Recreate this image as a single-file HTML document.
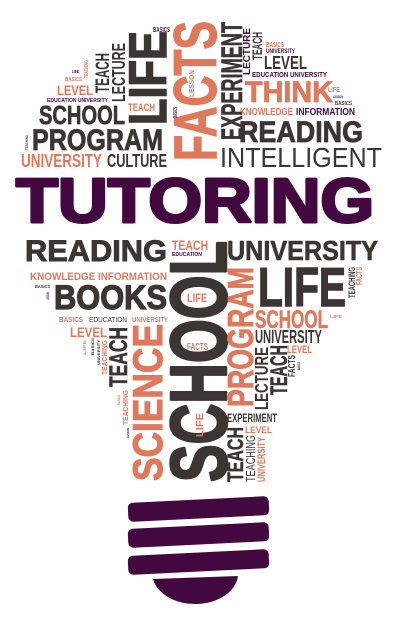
<!DOCTYPE html>
<html><head><meta charset="utf-8"><style>
html,body{margin:0;padding:0;background:#fff;width:400px;height:628px;overflow:hidden}
svg{display:block}
text{font-family:"Liberation Sans",sans-serif;font-weight:bold}
.d{fill:#3b3534}.o{fill:#e0785b}.p{fill:#42083f}.n{font-weight:normal}
.sd{stroke:#3b3534}.so{stroke:#e0785b}.sp{stroke:#42083f}
</style></head><body>
<svg width="400" height="628" viewBox="0 0 400 628" xmlns="http://www.w3.org/2000/svg">
<g>
<text class="p" x="153" y="32" font-size="7" textLength="17" lengthAdjust="spacingAndGlyphs">BASICS</text>
<text class="d" x="264" y="69" font-size="18" textLength="43" lengthAdjust="spacingAndGlyphs">LEVEL</text>
<text class="o" x="266" y="47" font-size="7" textLength="18" lengthAdjust="spacingAndGlyphs">BASICS</text>
<text class="p" x="266" y="53" font-size="6" textLength="29" lengthAdjust="spacingAndGlyphs">UNIVERSITY</text>
<text class="p" x="252" y="77" font-size="7" textLength="75" lengthAdjust="spacingAndGlyphs">EDUCATION UNIVERSITY</text>
<text class="o so" stroke-width="0.8" x="245" y="102" font-size="30" textLength="88" lengthAdjust="spacingAndGlyphs">THINK</text>
<text class="o" x="328" y="92" font-size="7" textLength="12" lengthAdjust="spacingAndGlyphs">LIFE</text>
<text class="p" x="333" y="98" font-size="4" textLength="10" lengthAdjust="spacingAndGlyphs">LESSON</text>
<text class="d" x="335" y="105" font-size="5.5" textLength="17" lengthAdjust="spacingAndGlyphs">BASICS</text>
<text class="o" x="240" y="115" font-size="10" textLength="53" lengthAdjust="spacingAndGlyphs">KNOWLEDGE</text>
<text class="p" x="296" y="115" font-size="10" textLength="59" lengthAdjust="spacingAndGlyphs">INFORMATION</text>
<text class="d sd" stroke-width="0.8" x="239" y="142" font-size="30" textLength="124" lengthAdjust="spacingAndGlyphs">READING</text>
<text class="d n" x="220" y="167" font-size="28" textLength="162" lengthAdjust="spacingAndGlyphs">INTELLIGENT</text>
<text class="p" x="72" y="73" font-size="4.5" textLength="7" lengthAdjust="spacingAndGlyphs">LIFE</text>
<text class="o" x="65" y="81" font-size="5.5" textLength="17" lengthAdjust="spacingAndGlyphs">BASICS</text>
<text class="o" x="57" y="95" font-size="14" textLength="36" lengthAdjust="spacingAndGlyphs">LEVEL</text>
<text class="p" x="47" y="102" font-size="5.5" textLength="61" lengthAdjust="spacingAndGlyphs">EDUCATION UNIVERSITY</text>
<text class="o" x="128" y="111" font-size="11" textLength="27" lengthAdjust="spacingAndGlyphs">TEACH</text>
<text class="d sd" stroke-width="0.7" x="39" y="124" font-size="26" textLength="86" lengthAdjust="spacingAndGlyphs">SCHOOL</text>
<text class="d sd" stroke-width="0.8" x="32" y="150" font-size="30" textLength="131" lengthAdjust="spacingAndGlyphs">PROGRAM</text>
<text class="o" x="21" y="167" font-size="18" textLength="81" lengthAdjust="spacingAndGlyphs">UNIVERSITY</text>
<text class="d" x="107" y="167" font-size="18" textLength="60" lengthAdjust="spacingAndGlyphs">CULTURE</text>
<text class="p sp" stroke-width="3" stroke-linejoin="round" x="16" y="222" font-size="62" textLength="358" lengthAdjust="spacingAndGlyphs">TUTORING</text>
<text class="d sd" stroke-width="0.9" x="25" y="261" font-size="30" textLength="142" lengthAdjust="spacingAndGlyphs">READING</text>
<text class="o" x="172" y="250" font-size="14" textLength="36" lengthAdjust="spacingAndGlyphs">TEACH</text>
<text class="p" x="172" y="256" font-size="5.5" textLength="30" lengthAdjust="spacingAndGlyphs">EDUCATION</text>
<text class="d sd" stroke-width="0.6" x="227" y="260" font-size="28" textLength="151" lengthAdjust="spacingAndGlyphs">UNIVERSITY</text>
<text class="o" x="30" y="280" font-size="11" textLength="137" lengthAdjust="spacingAndGlyphs">KNOWLEDGE INFORMATION</text>
<text class="d sd" stroke-width="1.5" x="258" y="306" font-size="55" textLength="88" lengthAdjust="spacingAndGlyphs">LIFE</text>
<text class="d" x="35" y="288" font-size="4.5" textLength="15" lengthAdjust="spacingAndGlyphs">BASICS</text>
<text class="d sd" stroke-width="1.2" x="54" y="309" font-size="34" textLength="113" lengthAdjust="spacingAndGlyphs">BOOKS</text>
<text class="o" x="187" y="302" font-size="12" textLength="20" lengthAdjust="spacingAndGlyphs">LIFE</text>
<text class="o" x="59" y="322" font-size="7" textLength="24" lengthAdjust="spacingAndGlyphs">BASICS</text>
<text class="d n" x="89" y="322" font-size="7" textLength="38" lengthAdjust="spacingAndGlyphs">EDUCATION</text>
<text class="o" x="132" y="322" font-size="7" textLength="36" lengthAdjust="spacingAndGlyphs">UNIVERSITY</text>
<text class="o so" stroke-width="0.6" x="255" y="328" font-size="25" textLength="73" lengthAdjust="spacingAndGlyphs">SCHOOL</text>
<text class="o" x="330" y="318" font-size="4.5" textLength="12" lengthAdjust="spacingAndGlyphs">LIFE</text>
<text class="d" x="255" y="343" font-size="18" textLength="67" lengthAdjust="spacingAndGlyphs">UNIVERSITY</text>
<text class="o" x="70" y="337" font-size="14" textLength="37" lengthAdjust="spacingAndGlyphs">LEVEL</text>
<text class="o" x="187" y="350" font-size="10" textLength="21" lengthAdjust="spacingAndGlyphs">FACTS</text>
<text class="o" x="287" y="353" font-size="11" textLength="25" lengthAdjust="spacingAndGlyphs">LEVEL</text>
<text class="d" x="227" y="422" font-size="12" textLength="50" lengthAdjust="spacingAndGlyphs">EXPERIMENT</text>
<text class="o" x="245" y="433" font-size="9" textLength="27" lengthAdjust="spacingAndGlyphs">LEVEL</text>
<text class="d sd" stroke-width="1.5" transform="translate(166,125) rotate(-90)" font-size="53" textLength="94" lengthAdjust="spacingAndGlyphs">LIFE</text>
<text class="o so" stroke-width="1.3" transform="translate(216,161) rotate(-90)" font-size="60" textLength="140" lengthAdjust="spacingAndGlyphs">FACTS</text>
<text class="d sd" stroke-width="0.6" transform="translate(242,140) rotate(-90)" font-size="30" textLength="118" lengthAdjust="spacingAndGlyphs">EXPERIMENT</text>
<text class="p" transform="translate(250,75) rotate(-90)" font-size="10" textLength="47" lengthAdjust="spacingAndGlyphs">LECTURE</text>
<text class="d" transform="translate(262,60) rotate(-90)" font-size="14" textLength="28" lengthAdjust="spacingAndGlyphs">TEACH</text>
<text class="o" transform="translate(88,78) rotate(-90)" font-size="5.5" textLength="18" lengthAdjust="spacingAndGlyphs">TEACHING</text>
<text class="d" transform="translate(109,93) rotate(-90)" font-size="19" textLength="40" lengthAdjust="spacingAndGlyphs">TEACH</text>
<text class="d" transform="translate(125,102) rotate(-90)" font-size="18" textLength="59" lengthAdjust="spacingAndGlyphs">LECTURE</text>
<text class="p" transform="translate(177,118) rotate(-90)" font-size="5.5" textLength="11" lengthAdjust="spacingAndGlyphs">BASICS</text>
<text class="o" transform="translate(194,97) rotate(-90)" font-size="7" textLength="27" lengthAdjust="spacingAndGlyphs">LESSON</text>
<text class="d" transform="translate(28,150) rotate(-90)" font-size="4" textLength="15" lengthAdjust="spacingAndGlyphs">TEACHING</text>
<text class="d sd" stroke-width="2.5" stroke-linejoin="round" transform="translate(226,482) rotate(-90)" font-size="80" textLength="241" lengthAdjust="spacingAndGlyphs">SCHOOL</text>
<text class="d" transform="translate(355,298) rotate(-90)" font-size="9" textLength="31" lengthAdjust="spacingAndGlyphs">TEACHING</text>
<text class="o" transform="translate(362,285) rotate(-90)" font-size="8" textLength="18" lengthAdjust="spacingAndGlyphs">FACTS</text>
<text class="o so" stroke-width="0.8" transform="translate(253,407) rotate(-90)" font-size="36" textLength="140" lengthAdjust="spacingAndGlyphs">PROGRAM</text>
<text class="p" transform="translate(49,300) rotate(-90)" font-size="4" textLength="8" lengthAdjust="spacingAndGlyphs">LESSON</text>
<text class="d sd" stroke-width="0.6" transform="translate(127,387) rotate(-90)" font-size="25" textLength="60" lengthAdjust="spacingAndGlyphs">TEACH</text>
<text class="o so" stroke-width="1.1" transform="translate(162,481) rotate(-90)" font-size="42" textLength="157" lengthAdjust="spacingAndGlyphs">SCIENCE</text>
<text class="d" transform="translate(268,410) rotate(-90)" font-size="18" textLength="63" lengthAdjust="spacingAndGlyphs">LECTURE</text>
<text class="d sd" stroke-width="0.5" transform="translate(287,395) rotate(-90)" font-size="24" textLength="50" lengthAdjust="spacingAndGlyphs">TEACH</text>
<text class="d" transform="translate(295,377) rotate(-90)" font-size="10" textLength="22" lengthAdjust="spacingAndGlyphs">FACTS</text>
<text class="p" transform="translate(300,370) rotate(-90)" font-size="4" textLength="8" lengthAdjust="spacingAndGlyphs">BASICS</text>
<text class="o" transform="translate(203,437) rotate(-90)" font-size="10" textLength="24" lengthAdjust="spacingAndGlyphs">LIFE</text>
<text class="d sd" stroke-width="0.5" transform="translate(243,482) rotate(-90)" font-size="22" textLength="55" lengthAdjust="spacingAndGlyphs">TEACH</text>
<text class="d n" transform="translate(255,482) rotate(-90)" font-size="13" textLength="47" lengthAdjust="spacingAndGlyphs">TEACHING</text>
<text class="o" transform="translate(265,482) rotate(-90)" font-size="11" textLength="45" lengthAdjust="spacingAndGlyphs">UNIVERSITY</text>
<text class="o" transform="translate(86,355) rotate(-90)" font-size="4" textLength="15" lengthAdjust="spacingAndGlyphs">LIFE</text>
<text class="p" transform="translate(94,355) rotate(-90)" font-size="4" textLength="17" lengthAdjust="spacingAndGlyphs">BASICS</text>
<text class="d" transform="translate(100,365) rotate(-90)" font-size="4" textLength="25" lengthAdjust="spacingAndGlyphs">UNIVERSITY</text>
<text class="o" transform="translate(107,375) rotate(-90)" font-size="7" textLength="35" lengthAdjust="spacingAndGlyphs">TEACHING</text>
<text class="o" transform="translate(120,405) rotate(-90)" font-size="4" textLength="10" lengthAdjust="spacingAndGlyphs">BASICS</text>
<text class="o" transform="translate(128,425) rotate(-90)" font-size="7" textLength="35" lengthAdjust="spacingAndGlyphs">TEACHING</text>
<text class="p" transform="translate(129,438) rotate(-90)" font-size="3" textLength="10" lengthAdjust="spacingAndGlyphs">LESSON</text>
</g>
<g fill="#42083f">
<rect x="128" y="499.5" width="141" height="19" rx="5" transform="rotate(-2.8 198.5 509)"/>
<rect x="128" y="525.5" width="141" height="19" rx="5" transform="rotate(-2.8 198.5 535)"/>
<rect x="128" y="552.5" width="141" height="19" rx="5" transform="rotate(-2.8 198.5 562)"/>
<path d="M153 579 L238 576 A43 31 0 0 1 153 579 Z"/>
</g>
</svg>
</body></html>
